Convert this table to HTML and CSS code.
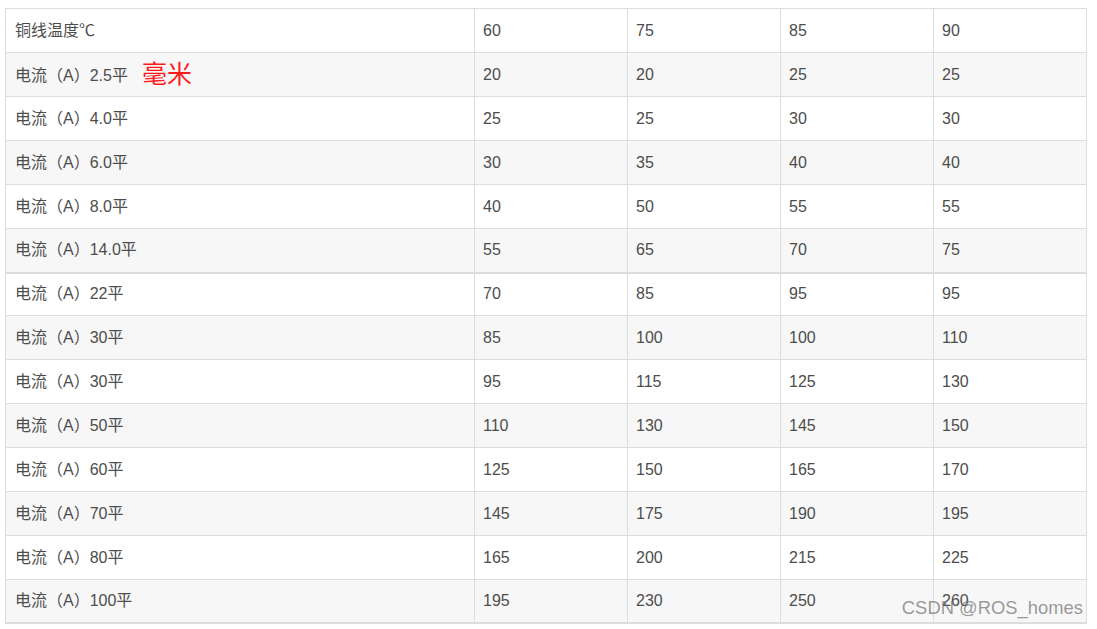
FILE: index.html
```html
<!DOCTYPE html>
<html lang="zh">
<head>
<meta charset="utf-8">
<link rel="stylesheet" href="styles.css">
</head>
<body>
<div class="wrap">
<table class="grid">
<colgroup><col class="c1"><col class="cn"><col class="cn"><col class="cn"><col class="cn"></colgroup>
<tbody>
<tr><td>铜线温度℃</td><td>60</td><td>75</td><td>85</td><td>90</td></tr>
<tr><td>电流（A）2.5平<span class="mark">毫米</span></td><td>20</td><td>20</td><td>25</td><td>25</td></tr>
<tr><td>电流（A）4.0平</td><td>25</td><td>25</td><td>30</td><td>30</td></tr>
<tr><td>电流（A）6.0平</td><td>30</td><td>35</td><td>40</td><td>40</td></tr>
<tr><td>电流（A）8.0平</td><td>40</td><td>50</td><td>55</td><td>55</td></tr>
<tr><td>电流（A）14.0平</td><td>55</td><td>65</td><td>70</td><td>75</td></tr>
<tr class="split"><td>电流（A）22平</td><td>70</td><td>85</td><td>95</td><td>95</td></tr>
<tr><td>电流（A）30平</td><td>85</td><td>100</td><td>100</td><td>110</td></tr>
<tr><td>电流（A）30平</td><td>95</td><td>115</td><td>125</td><td>130</td></tr>
<tr><td>电流（A）50平</td><td>110</td><td>130</td><td>145</td><td>150</td></tr>
<tr><td>电流（A）60平</td><td>125</td><td>150</td><td>165</td><td>170</td></tr>
<tr><td>电流（A）70平</td><td>145</td><td>175</td><td>190</td><td>195</td></tr>
<tr><td>电流（A）80平</td><td>165</td><td>200</td><td>215</td><td>225</td></tr>
<tr class="last"><td>电流（A）100平</td><td>195</td><td>230</td><td>250</td><td>260</td></tr>
</tbody>
</table>
<div class="watermark">CSDN @ROS_homes</div>
</div>
</body>
</html>
```

FILE: styles.css
```css
html, body {
  margin: 0;
  padding: 0;
  background: #ffffff;
}
body {
  padding: 8px 0 0 5px;
  font-family: "Liberation Sans", "Noto Sans CJK SC", sans-serif;
  color: #4d4d4d;
}
.wrap {
  position: relative;
  width: 1082px;
}
.grid {
  border-collapse: collapse;
  table-layout: fixed;
  width: 1082px;
  font-size: 16px;
}
.c1 { width: 469px; }
.cn { width: 153px; }
.grid td {
  border: 1px solid #dddddd;
  height: 44px;
  padding: 0 8px 0 8px;
  box-sizing: border-box;
  vertical-align: middle;
  white-space: nowrap;
  line-height: 20px;
}
.grid td:first-child {
  padding-left: 9px;
}
.grid tr:nth-child(even) td {
  background: #f7f7f7;
}
.grid tr.split td {
  border-top: 2px solid #dddddd;
  height: 43px;
}
.grid tr.last td {
  border-bottom: 2px solid #dddddd;
  height: 43px;
}
.mark {
  color: #ff1a1a;
  font-size: 25px;
  margin-left: 14px;
  vertical-align: -2px;
}
.watermark {
  position: absolute;
  right: 4px;
  bottom: 5px;
  font-size: 18.4px;
  color: rgba(110, 110, 110, 0.7);
  font-family: "Liberation Sans", sans-serif;
  pointer-events: none;
}
```
